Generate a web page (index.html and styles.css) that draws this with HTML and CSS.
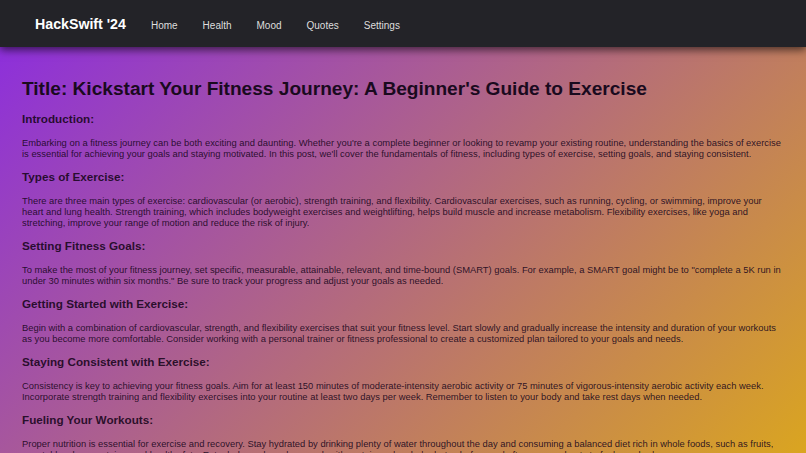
FILE: index.html
```html
<!DOCTYPE html>
<html lang="en">
<head>
<meta charset="utf-8">
<title>HackSwift '24</title>
<link rel="stylesheet" href="styles.css">
</head>
<body>
<header class="topbar">
  <div class="brand">HackSwift '24</div>
  <nav class="nav">
    <a class="nav-link" href="#">Home</a>
    <a class="nav-link" href="#">Health</a>
    <a class="nav-link" href="#">Mood</a>
    <a class="nav-link" href="#">Quotes</a>
    <a class="nav-link" href="#">Settings</a>
  </nav>
</header>
<main class="article">
  <h1 class="title">Title: Kickstart Your Fitness Journey: A Beginner's Guide to Exercise</h1>
  <h2 class="section">Introduction:</h2>
  <p class="para">Embarking on a fitness journey can be both exciting and daunting. Whether you're a complete beginner or looking to revamp your existing routine, understanding the basics of exercise is essential for achieving your goals and staying motivated. In this post, we'll cover the fundamentals of fitness, including types of exercise, setting goals, and staying consistent.</p>
  <h2 class="section">Types of Exercise:</h2>
  <p class="para">There are three main types of exercise: cardiovascular (or aerobic), strength training, and flexibility. Cardiovascular exercises, such as running, cycling, or swimming, improve your heart and lung health. Strength training, which includes bodyweight exercises and weightlifting, helps build muscle and increase metabolism. Flexibility exercises, like yoga and stretching, improve your range of motion and reduce the risk of injury.</p>
  <h2 class="section">Setting Fitness Goals:</h2>
  <p class="para">To make the most of your fitness journey, set specific, measurable, attainable, relevant, and time-bound (SMART) goals. For example, a SMART goal might be to "complete a 5K run in under 30 minutes within six months." Be sure to track your progress and adjust your goals as needed.</p>
  <h2 class="section">Getting Started with Exercise:</h2>
  <p class="para">Begin with a combination of cardiovascular, strength, and flexibility exercises that suit your fitness level. Start slowly and gradually increase the intensity and duration of your workouts as you become more comfortable. Consider working with a personal trainer or fitness professional to create a customized plan tailored to your goals and needs.</p>
  <h2 class="section">Staying Consistent with Exercise:</h2>
  <p class="para">Consistency is key to achieving your fitness goals. Aim for at least 150 minutes of moderate-intensity aerobic activity or 75 minutes of vigorous-intensity aerobic activity each week. Incorporate strength training and flexibility exercises into your routine at least two days per week. Remember to listen to your body and take rest days when needed.</p>
  <h2 class="section">Fueling Your Workouts:</h2>
  <p class="para">Proper nutrition is essential for exercise and recovery. Stay hydrated by drinking plenty of water throughout the day and consuming a balanced diet rich in whole foods, such as fruits, vegetables, lean proteins, and healthy fats. Eat a balanced meal or snack with protein and carbohydrates before and after your workouts to fuel your body.</p>
</main>
</body>
</html>
```
FILE: styles.css
```css
html, body {
  margin: 0;
  padding: 0;
}
body {
  font-family: "Liberation Sans", Arial, sans-serif;
  min-height: 100vh;
  background: linear-gradient(135deg, #8a2be2, #daa520) fixed;
  color: #222;
}
.topbar {
  position: relative;
  z-index: 1;
  height: 47px;
  display: flex;
  align-items: center;
  padding: 0 35px;
  background: #232328;
  box-shadow: 0 3px 8px rgba(0, 0, 0, 0.6);
}
.brand {
  color: #fff;
  font-weight: bold;
  font-size: 14.2px;
}
.nav {
  display: flex;
  gap: 25px;
  margin-left: 25px;
}
.nav-link {
  color: #ddd;
  text-decoration: none;
  font-size: 10px;
  margin-top: 3px;
}
.article {
  padding: 17px 22px 20px 22px;
  color: rgba(24, 6, 28, 0.9);
}
.title {
  font-size: 19.1px;
  line-height: 23px;
  margin: 13.4px 0 11.4px 0;
  color: #1a0a1e;
}
.section {
  font-size: 11.7px;
  line-height: 13.5px;
  margin: 10.7px 0 11.8px 0;
}
.para {
  font-size: 9.4px;
  line-height: 11px;
  margin: 0;
}
```
